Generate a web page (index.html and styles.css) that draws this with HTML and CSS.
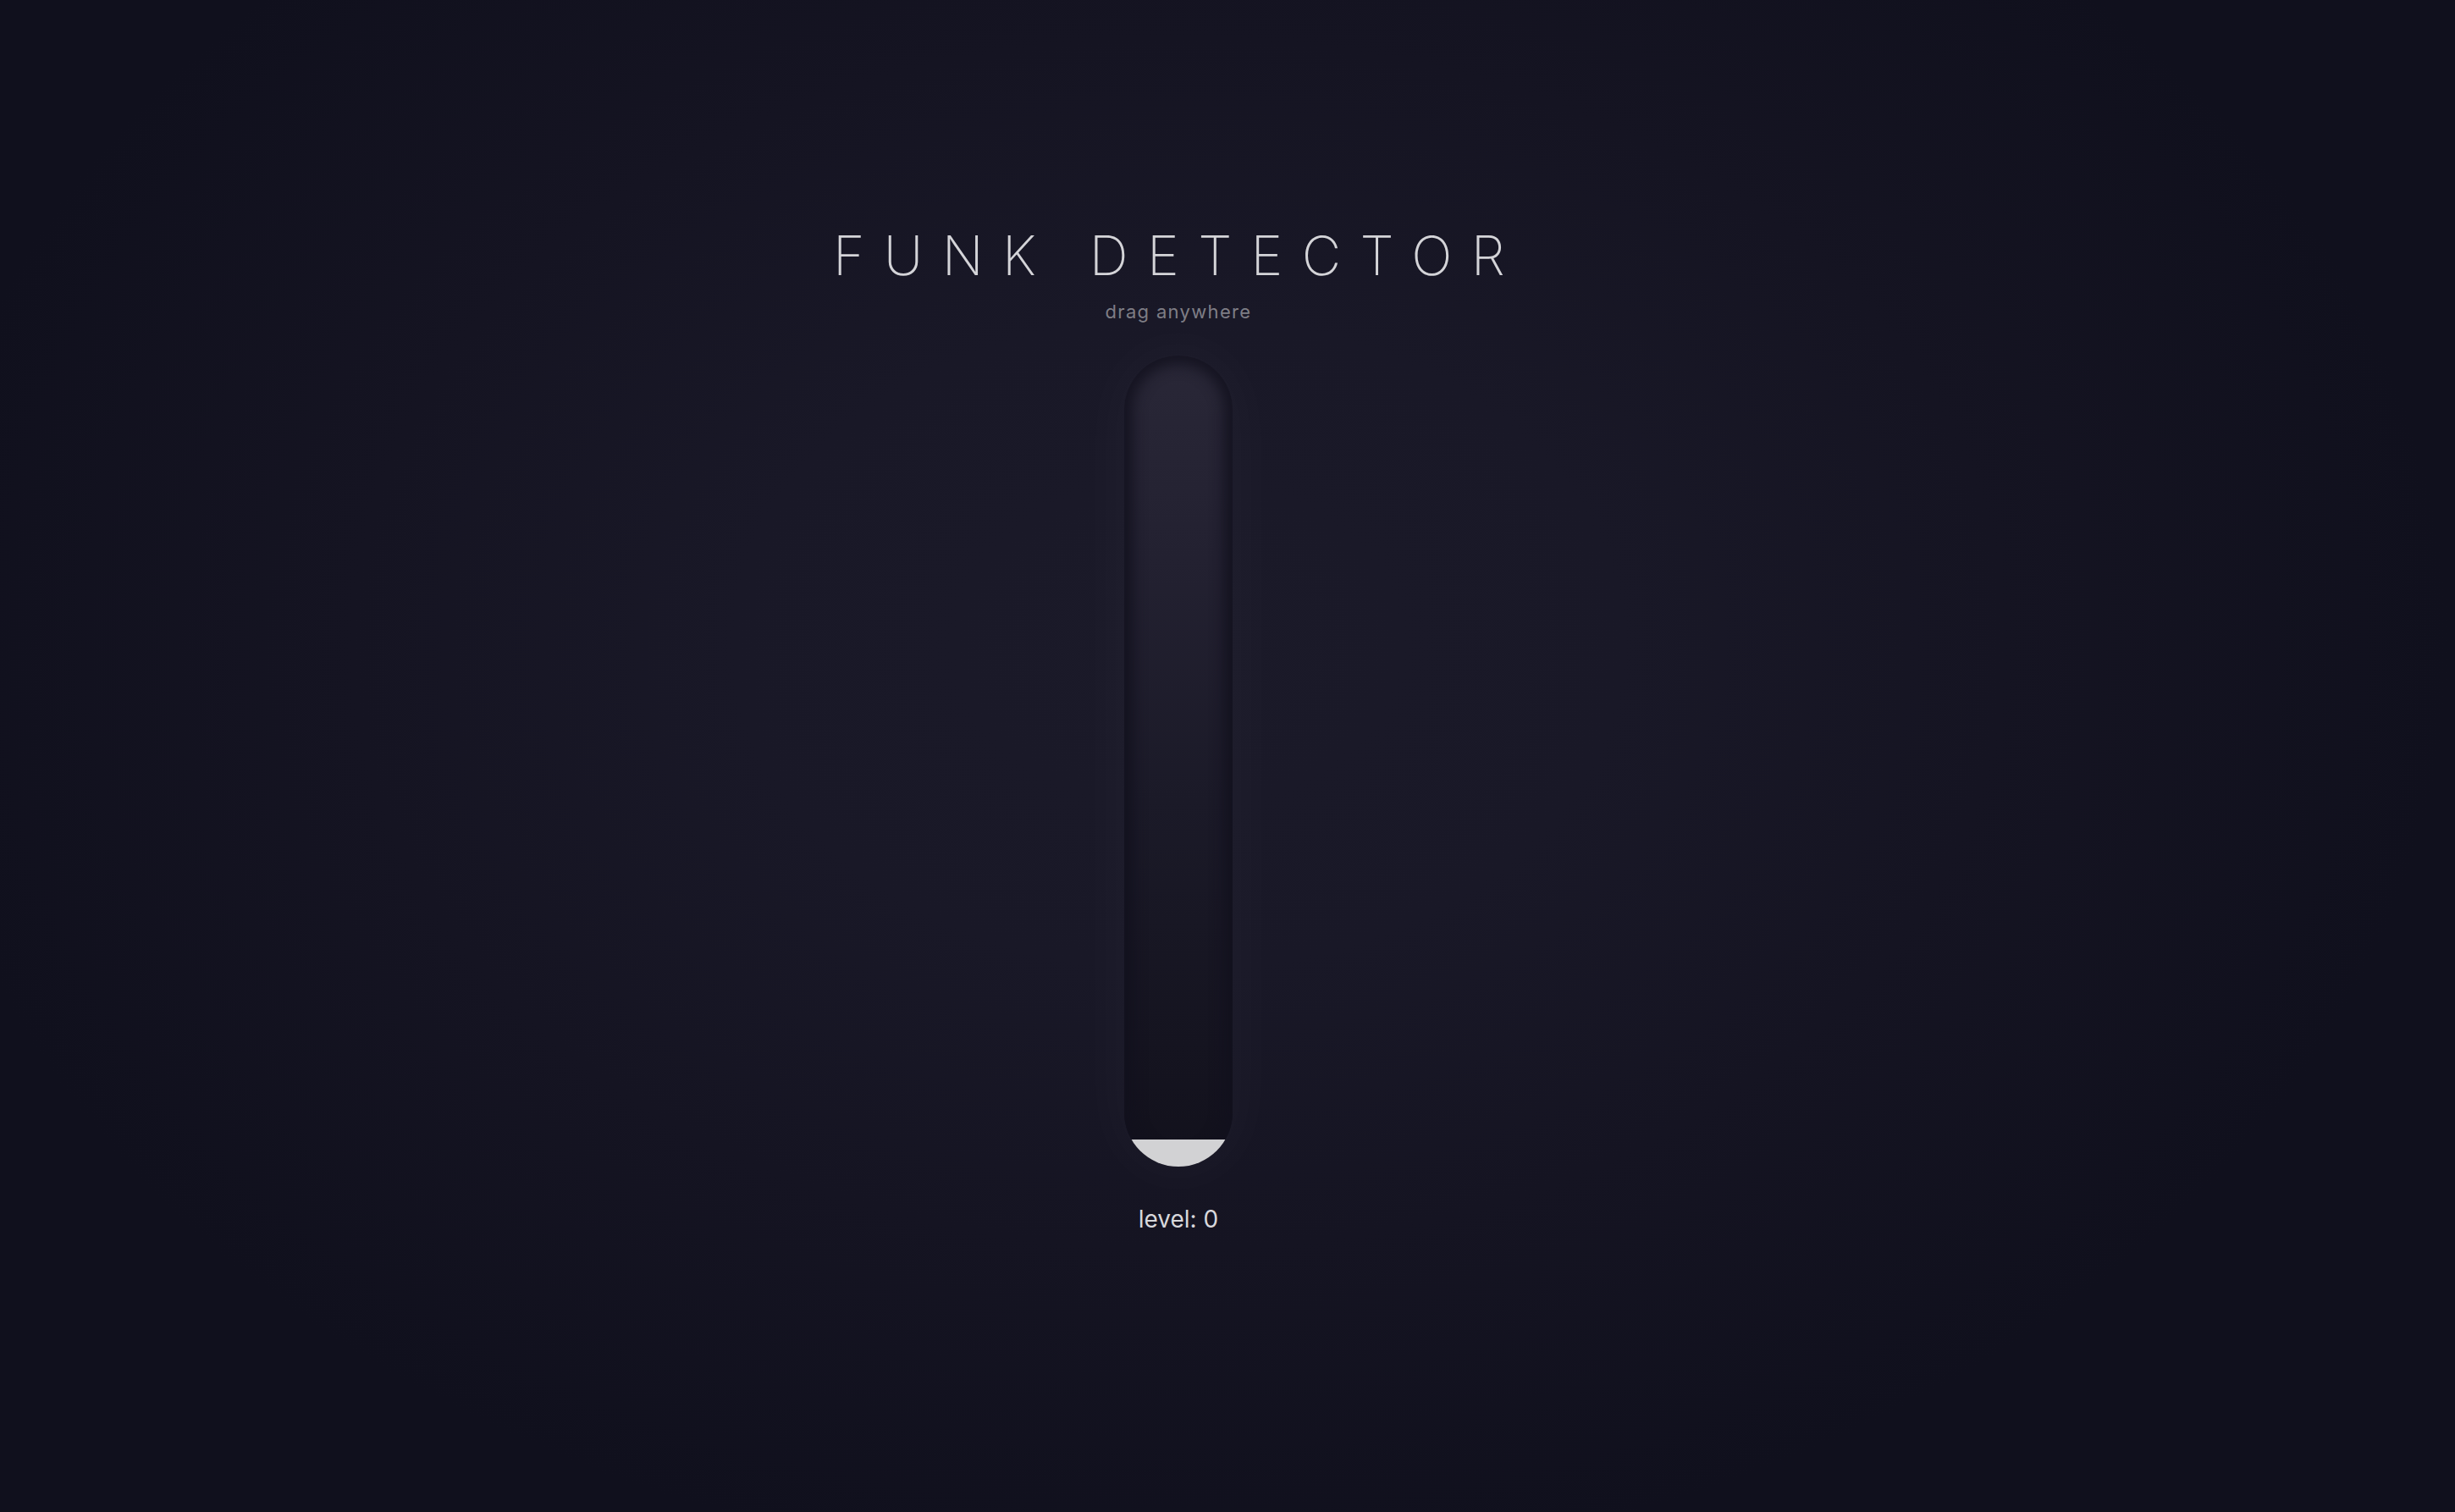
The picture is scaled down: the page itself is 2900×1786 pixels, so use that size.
FILE: index.html
```html
<!DOCTYPE html>
<html>
<head>
  <title>Funk Detector</title>
  <link rel="stylesheet" href="styles.css">
</head>
<body>
  <div id="stage">
    <h1 class="title">FUNK DETECTOR</h1>
    <p class="hint">drag anywhere</p>
    <div class="tube">
      <div class="fill" style="height: 32px;"></div>
    </div>
    <div class="level">level: <span id="level-value">0</span></div>
  </div>
</body>
</html>
```
FILE: styles.css
```css
/* Funk detector page */
html, body {
  margin: 0;
  padding: 0;
}

body {
  height: 1786px;
  overflow: hidden;
  font-family: Inter, "Noto Sans", sans-serif;
  background-color: #12121f;
  background-image: radial-gradient(ellipse 1500px 1100px at 1392px 760px, #1b1a29 0%, #191827 35%, #151422 65%, #10101d 100%);
}

#stage {
  width: 2784px;
  display: flex;
  flex-direction: column;
  align-items: center;
  padding-top: 270px;
}

.title {
  margin: 0;
  font-size: 64px;
  line-height: 64px;
  font-weight: 200;
  letter-spacing: 0.35em;
  color: #d4d4d8;
}

.hint {
  margin: 23px 0 0 0;
  font-size: 22px;
  line-height: 22px;
  letter-spacing: 0.06em;
  color: rgba(255, 255, 255, 0.45);
}

.tube {
  margin-top: 41px;
  width: 128px;
  height: 958px;
  border-radius: 64px;
  overflow: hidden;
  display: flex;
  flex-direction: column;
  justify-content: flex-end;
  background: linear-gradient(to bottom, #292737 0%, #232131 25%, #1b1a28 55%, #12111c 100%);
  box-shadow: inset 0 0 16px 10px rgba(18, 17, 29, 0.85), 0 0 70px 10px rgba(255, 255, 255, 0.03);
}

.fill {
  background-color: #d2d2d4;
  flex-shrink: 0;
}

.level {
  margin-top: 48px;
  font-size: 28px;
  line-height: 28px;
  color: #d8d8dc;
}
```
